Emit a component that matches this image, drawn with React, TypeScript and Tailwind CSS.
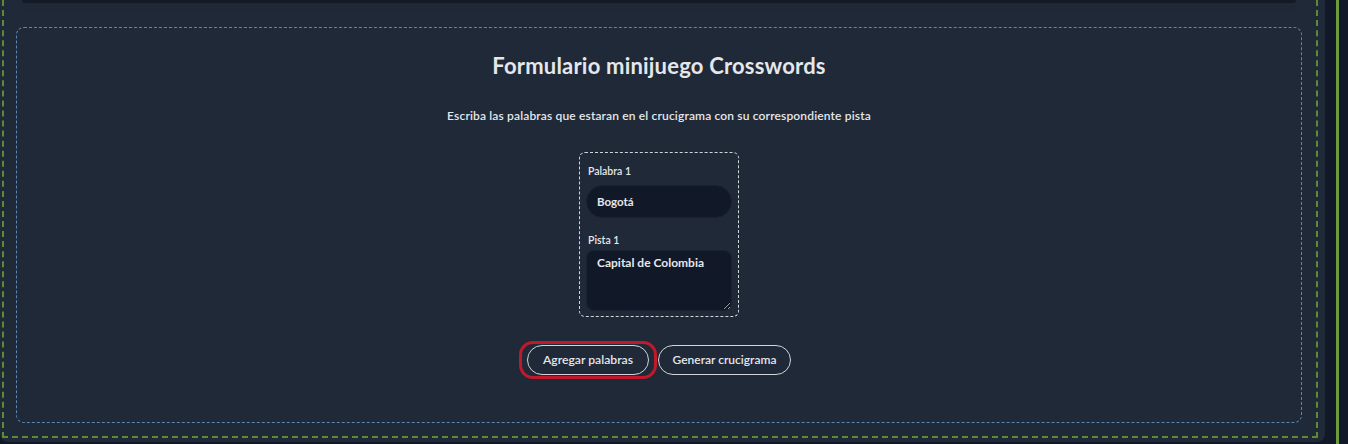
import { useState } from "react";

export default function App() {
  const [palabra, setPalabra] = useState("Bogotá");
  const [pista, setPista] = useState("Capital de Colombia");

  return (
    <div
      className="w-[1348px] h-[444px] bg-[#111827] flex overflow-hidden"
      style={{ fontFamily: "Lato, 'Noto Sans', sans-serif" }}
    >
      <div className="w-[1325px] h-[442px] shrink-0 bg-[#1f2937] rounded-b-lg pl-[2px] pr-[7px] pb-[4px]">
        {/* contenedor principal */}
        <div className="h-full border-2 border-dashed border-[#5f8a35] border-t-0 px-[12px] pr-[14px] pb-[13px] flex flex-col">
          <div className="mx-[6px] h-[3px] bg-[#141b27] rounded-b-lg shadow-md" />

          <section className="mt-[24px] flex-1 border border-dashed border-[#5c87b2] rounded-lg flex flex-col items-center pt-[24px]">
            <h1 className="text-[22px] leading-[28px] font-bold tracking-[0.2px] text-[#e5e7eb]">
              Formulario minijuego Crosswords
            </h1>
            <p className="mt-[28px] text-[12px] leading-[16px] font-semibold tracking-[0.15px] text-[#e5e7eb]">
              Escriba las palabras que estaran en el crucigrama con su correspondiente pista
            </p>

            <div className="mt-[28px] w-[160px] border border-dashed border-[#d1d5db] rounded-md px-[6px] pt-[11px] pb-[5px]">
              <label className="block text-[10.5px] leading-[14px] font-semibold text-[#e5e7eb] pl-[2px]">
                Palabra 1
              </label>
              <input
                value={palabra}
                onChange={(e) => setPalabra(e.target.value)}
                className="mt-[7px] w-full h-[33px] rounded-full bg-[#111827] border border-[#1a2231] pl-[10px] text-[11.5px] font-bold text-[#e5e7eb] outline-none"
              />
              <label className="block mt-[15px] text-[10.5px] leading-[14px] font-semibold text-[#e5e7eb] pl-[2px]">
                Pista 1
              </label>
              <textarea
                value={pista}
                onChange={(e) => setPista(e.target.value)}
                className="mt-[3px] block w-full h-[61px] rounded-lg bg-[#111827] border border-[#1a2231] pl-[10px] pt-[3px] text-[12px] font-bold text-[#e5e7eb] outline-none"
              />
            </div>

            <div className="mt-[28px] flex gap-[9px]">
              <button className="relative w-[122px] h-[30px] rounded-full border border-[#d1d5db] text-[12.2px] font-semibold text-[#e5e7eb]">
                <span className="absolute -inset-x-[9px] -inset-y-[5px] border-[3px] border-[#c0192c] rounded-[14px] pointer-events-none" />
                Agregar palabras
              </button>
              <button className="w-[133px] h-[30px] rounded-full border border-[#d1d5db] text-[12px] font-semibold text-[#e5e7eb]">
                Generar crucigrama
              </button>
            </div>
          </section>
        </div>
      </div>
      <div className="w-[11px] shrink-0" />
      <div className="w-[3px] shrink-0 bg-[#6b9b3d]" />
    </div>
  );
}
